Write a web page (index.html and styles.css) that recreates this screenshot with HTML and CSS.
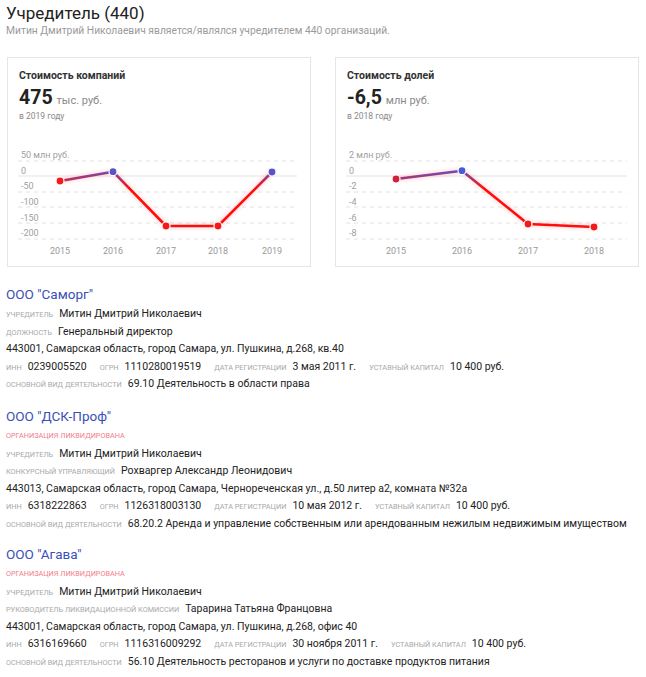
FILE: index.html
```html
<!DOCTYPE html>
<html lang="ru">
<head>
<meta charset="utf-8">
<link rel="stylesheet" href="styles.css">
</head>
<body>
<div class="page">
  <h1 class="title">Учредитель (440)</h1>
  <p class="subtitle">Митин Дмитрий Николаевич является/являлся учредителем 440 организаций.</p>

  <div class="cards">
    <div class="card">
      <div class="card-head">
        <div class="card-title">Стоимость компаний</div>
        <div class="card-value"><span class="num">475</span> <span class="unit">тыс. руб.</span></div>
        <div class="card-year">в 2019 году</div>
      </div>
      <svg class="chart" width="302" height="144" viewBox="0 0 302 144">
        <defs>
          <linearGradient id="g1" gradientUnits="userSpaceOnUse" x1="0" y1="46" x2="0" y2="66">
            <stop offset="0" stop-color="#5656cc"/>
            <stop offset="1" stop-color="#ff1010"/>
          </linearGradient>
          <filter id="glow1" x="-20%" y="-20%" width="140%" height="140%">
            <feDropShadow dx="0" dy="0" stdDeviation="2" flood-color="#ff3030" flood-opacity="0.35"/>
          </filter>
        </defs>
        <g class="grid">
          <line x1="10" y1="39" x2="289" y2="39" class="dash"/>
          <line x1="10" y1="54" x2="289" y2="54" class="zero"/>
          <line x1="10" y1="70" x2="289" y2="70" class="dash"/>
          <line x1="10" y1="85" x2="289" y2="85" class="dash"/>
          <line x1="10" y1="101" x2="289" y2="101" class="dash"/>
          <line x1="10" y1="117" x2="289" y2="117" class="dash"/>
        </g>
        <g class="ylab">
          <text x="13" y="35.5">50 млн руб.</text>
          <text x="13" y="51.5">0</text>
          <text x="13" y="67">-50</text>
          <text x="13" y="82.5">-100</text>
          <text x="13" y="98.5">-150</text>
          <text x="13" y="114">-200</text>
        </g>
        <g class="xlab">
          <text x="52" y="131.5">2015</text>
          <text x="105" y="131.5">2016</text>
          <text x="158" y="131.5">2017</text>
          <text x="210" y="131.5">2018</text>
          <text x="264" y="131.5">2019</text>
        </g>
        <polyline class="series" stroke="url(#g1)" filter="url(#glow1)" points="52,59 105,49.7 158,104 210,104 264,50"/>
        <g class="dots">
          <circle cx="52" cy="59" r="4" class="neg"/>
          <circle cx="105" cy="49.7" r="4" class="pos"/>
          <circle cx="158" cy="104" r="4" class="neg"/>
          <circle cx="210" cy="104" r="4" class="neg"/>
          <circle cx="264" cy="50" r="4" class="pos"/>
        </g>
      </svg>
    </div>

    <div class="card">
      <div class="card-head">
        <div class="card-title">Стоимость долей</div>
        <div class="card-value"><span class="num">-6,5</span> <span class="unit">млн руб.</span></div>
        <div class="card-year">в 2018 году</div>
      </div>
      <svg class="chart" width="302" height="144" viewBox="0 0 302 144">
        <defs>
          <linearGradient id="g2" gradientUnits="userSpaceOnUse" x1="0" y1="46" x2="0" y2="66">
            <stop offset="0" stop-color="#4f5ad6"/>
            <stop offset="1" stop-color="#ff1010"/>
          </linearGradient>
          <filter id="glow2" x="-20%" y="-20%" width="140%" height="140%">
            <feDropShadow dx="0" dy="0" stdDeviation="2" flood-color="#ff3030" flood-opacity="0.35"/>
          </filter>
        </defs>
        <g class="grid">
          <line x1="10" y1="39" x2="291" y2="39" class="dash"/>
          <line x1="10" y1="54" x2="291" y2="54" class="zero"/>
          <line x1="10" y1="70" x2="291" y2="70" class="dash"/>
          <line x1="10" y1="85" x2="291" y2="85" class="dash"/>
          <line x1="10" y1="101" x2="291" y2="101" class="dash"/>
          <line x1="10" y1="117" x2="291" y2="117" class="dash"/>
        </g>
        <g class="ylab">
          <text x="13" y="35.5">2 млн руб.</text>
          <text x="13" y="51.5">0</text>
          <text x="13" y="67">-2</text>
          <text x="13" y="82.5">-4</text>
          <text x="13" y="98.5">-6</text>
          <text x="13" y="114">-8</text>
        </g>
        <g class="xlab">
          <text x="60" y="131.5">2015</text>
          <text x="126" y="131.5">2016</text>
          <text x="192" y="131.5">2017</text>
          <text x="258" y="131.5">2018</text>
        </g>
        <polyline class="series" stroke="url(#g2)" filter="url(#glow2)" points="60,57 126,48.7 192,102 258,105"/>
        <g class="dots">
          <circle cx="60" cy="57" r="4" class="mid"/>
          <circle cx="126" cy="48.7" r="4" class="pos2"/>
          <circle cx="192" cy="102" r="4" class="neg"/>
          <circle cx="258" cy="105" r="4" class="neg"/>
        </g>
      </svg>
    </div>
  </div>

  <div class="company">
    <a class="co-name">ООО "Саморг"</a>
    <div class="row"><span class="lbl">учредитель</span><span class="val">Митин Дмитрий Николаевич</span></div>
    <div class="row"><span class="lbl">должность</span><span class="val">Генеральный директор</span></div>
    <div class="row"><span class="val">443001, Самарская область, город Самара, ул. Пушкина, д.268, кв.40</span></div>
    <div class="row">
      <span class="grp"><span class="lbl">инн</span><span class="val">0239005520</span></span>
      <span class="grp"><span class="lbl">огрн</span><span class="val">1110280019519</span></span>
      <span class="grp"><span class="lbl">дата регистрации</span><span class="val">3 мая 2011 г.</span></span>
      <span class="grp"><span class="lbl">уставный капитал</span><span class="val">10 400 руб.</span></span>
    </div>
    <div class="row"><span class="lbl">основной вид деятельности</span><span class="val">69.10 Деятельность в области права</span></div>
  </div>

  <div class="company">
    <a class="co-name">ООО "ДСК-Проф"</a>
    <div class="row"><span class="status">организация ликвидирована</span></div>
    <div class="row"><span class="lbl">учредитель</span><span class="val">Митин Дмитрий Николаевич</span></div>
    <div class="row"><span class="lbl">конкурсный управляющий</span><span class="val">Рохваргер Александр Леонидович</span></div>
    <div class="row"><span class="val">443013, Самарская область, город Самара, Чернореченская ул., д.50 литер а2, комната №32а</span></div>
    <div class="row">
      <span class="grp"><span class="lbl">инн</span><span class="val">6318222863</span></span>
      <span class="grp"><span class="lbl">огрн</span><span class="val">1126318003130</span></span>
      <span class="grp"><span class="lbl">дата регистрации</span><span class="val">10 мая 2012 г.</span></span>
      <span class="grp"><span class="lbl">уставный капитал</span><span class="val">10 400 руб.</span></span>
    </div>
    <div class="row"><span class="lbl">основной вид деятельности</span><span class="val">68.20.2 Аренда и управление собственным или арендованным нежилым недвижимым имуществом</span></div>
  </div>

  <div class="company last">
    <a class="co-name">ООО "Агава"</a>
    <div class="row"><span class="status">организация ликвидирована</span></div>
    <div class="row"><span class="lbl">учредитель</span><span class="val">Митин Дмитрий Николаевич</span></div>
    <div class="row"><span class="lbl">руководитель ликвидационной комиссии</span><span class="val">Тарарина Татьяна Францовна</span></div>
    <div class="row"><span class="val">443001, Самарская область, город Самара, ул. Пушкина, д.268, офис 40</span></div>
    <div class="row">
      <span class="grp"><span class="lbl">инн</span><span class="val">6316169660</span></span>
      <span class="grp"><span class="lbl">огрн</span><span class="val">1116316009292</span></span>
      <span class="grp"><span class="lbl">дата регистрации</span><span class="val">30 ноября 2011 г.</span></span>
      <span class="grp"><span class="lbl">уставный капитал</span><span class="val">10 400 руб.</span></span>
    </div>
    <div class="row"><span class="lbl">основной вид деятельности</span><span class="val">56.10 Деятельность ресторанов и услуги по доставке продуктов питания</span></div>
  </div>
</div>
</body>
</html>
```

FILE: styles.css
```css
html, body {
  margin: 0;
  padding: 0;
  background: #fff;
}
body {
  font-family: Roboto, "Noto Sans", "Liberation Sans", sans-serif;
  color: #222;
}
.page {
  padding: 2px 8px 0 6px;
}
.title {
  margin: 0;
  font-size: 17px;
  font-weight: 400;
  line-height: 22px;
  color: #222;
}
.subtitle {
  margin: 0;
  font-size: 10.3px;
  line-height: 14px;
  color: #9a9a9a;
}
.cards {
  display: flex;
  gap: 24px;
  margin: 19px 0 0 1px;
}
.card {
  width: 302px;
  border: 1px solid #e6e6e6;
  box-sizing: content-box;
}
.card-head {
  padding: 11px 11px 0;
}
.card-title {
  font-size: 10.5px;
  line-height: 13px;
  font-weight: 700;
  color: #333;
}
.card-value {
  margin-top: 4px;
  line-height: 24px;
  height: 24px;
}
.card-value .num {
  font-size: 19.5px;
  font-weight: 700;
  color: #222;
}
.card-value .unit {
  font-size: 11px;
  color: #8a8a8a;
}
.card-year {
  font-size: 8.5px;
  line-height: 12px;
  color: #888;
}
.chart {
  display: block;
}
.grid line {
  stroke-width: 1;
}
.grid .dash {
  stroke: #e2e2e2;
  stroke-dasharray: 4 4;
}
.grid .zero {
  stroke: #e4e4e4;
}
.ylab text {
  font-size: 9px;
  fill: #a0a0a0;
}
.xlab text {
  font-size: 9px;
  fill: #999;
  text-anchor: middle;
}
.series {
  fill: none;
  stroke-width: 2.6;
  stroke-linejoin: round;
  stroke-linecap: round;
}
.dots circle {
  stroke: #fff;
  stroke-width: 1.2;
}
.dots .neg { fill: #f21a1a; }
.dots .pos { fill: #5a52c8; }
.dots .pos2 { fill: #4a5ad8; }
.dots .mid { fill: #d0203a; }

.company {
  margin-top: 17px;
}
.company + .company {
  margin-top: 13px;
}
.company.last {
  margin-top: 11.5px;
}
.co-name {
  display: block;
  font-size: 13.5px;
  line-height: 20px;
  color: #3a50b8;
  margin-bottom: 1px;
}
.row {
  display: flex;
  align-items: baseline;
  height: 17.6px;
  line-height: 17.6px;
  white-space: nowrap;
}
.grp {
  display: inline-flex;
  align-items: baseline;
  margin-right: 13px;
}
.lbl {
  font-size: 7.3px;
  text-transform: uppercase;
  color: #a8a8a8;
  margin-right: 6px;
}
.val {
  font-size: 10.5px;
  color: #222;
}
.status {
  font-size: 7.3px;
  text-transform: uppercase;
  color: #f27d8c;
}
```
